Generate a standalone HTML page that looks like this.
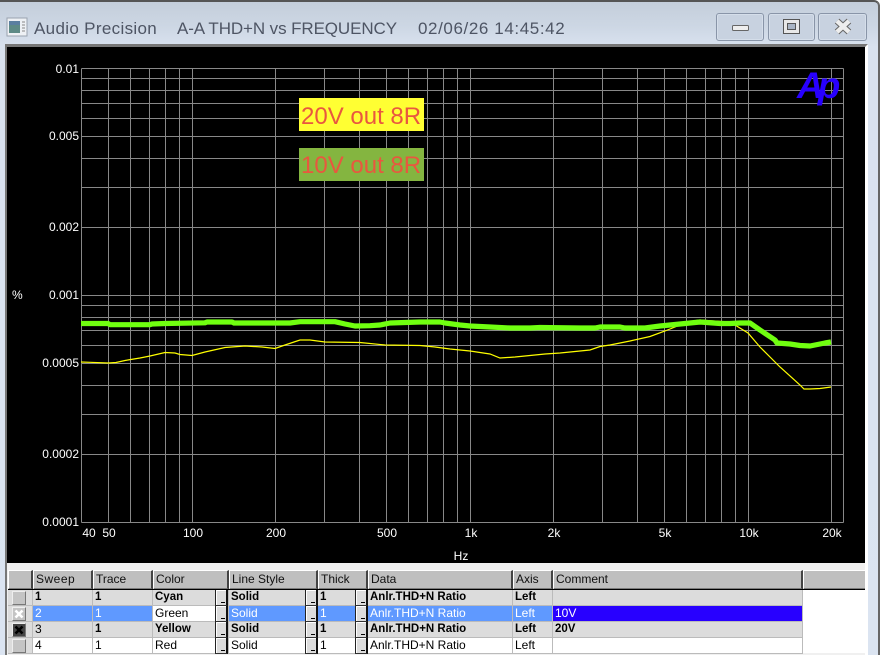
<!DOCTYPE html>
<html><head><meta charset="utf-8"><style>
html,body{margin:0;padding:0;width:882px;height:655px;overflow:hidden;background:#fff}
#win{position:absolute;left:0;top:0;width:880px;height:655px;background:linear-gradient(#c4cedb 0,#cdd7e4 25px,#d9e2ef 45px,#dbe4f1 655px);border-top:2px solid #555;border-right:2px solid #666;box-sizing:border-box;border-top-right-radius:6px}
.t{position:absolute;top:18px;font:17px/22px "Liberation Sans",sans-serif;color:#4e5564;white-space:pre}
.wb{position:absolute;top:13px;width:46px;height:26px;border:1px solid #8995a8;border-radius:3px;background:#c8d2e0;box-shadow:inset 0 0 0 1px #d5deea}
#client{position:absolute;left:5px;top:44px;width:863px;height:611px;background:#f0f0f0;border-left:2px solid #777;border-top:3px solid #777;box-sizing:border-box;border-right:3px solid #fff}
svg{position:absolute;left:0;top:0}
.lab{font:12px "Liberation Sans",sans-serif;fill:#fff}
.hd{position:absolute;top:570px;height:20px;box-sizing:border-box;background:#bfbfbf;border-top:1px solid #fff;border-left:1px solid #fff;border-right:2px solid #444;border-bottom:2px solid #7c7c7c;font:12px/17px "Liberation Sans",sans-serif;color:#111;padding-left:2px;white-space:nowrap;overflow:hidden}
#hline{position:absolute;left:8px;top:589px;width:857px;height:1px;background:#000}
.c{position:absolute;height:16px;box-sizing:border-box;border-right:1px solid #bbb;border-bottom:1px solid #bbb;font:12px/15px "Liberation Sans",sans-serif;color:#000;padding-left:2px;white-space:nowrap;overflow:hidden}
.b{font-weight:bold;font-size:11.5px}
.g{background:#dcdcdc}.w{background:#fff}.s{background:#5f99ff;color:#fff}
.dd{position:absolute;width:13px;height:16px;box-sizing:border-box;background:#dcdcdc;border-left:1px solid #222;border-right:2px solid #111;border-bottom:1px solid #333;box-shadow:inset 1px 1px 0 #fff}
.dd:after{content:"";position:absolute;right:1px;bottom:2px;width:4px;height:1px;background:#000}
.cb{position:absolute;left:12px;width:14px;height:14px;box-sizing:border-box;background:#c4c4c4;border:1px solid #eee;border-right-color:#777;border-bottom-color:#777}
</style></head><body>
<div id="win"></div>
<svg width="22" height="20" style="left:6px;top:17px"><rect x="1" y="1" width="20" height="18" fill="#eef1f5" stroke="#9aa3b0"/><rect x="3" y="4" width="11" height="12" fill="#5d8a86"/><rect x="3" y="4" width="11" height="4" fill="#5a7fa0"/><path d="M16 5h3M16 8h3M16 11h3M16 14h3" stroke="#888"/></svg>
<div class="t" style="left:34px;letter-spacing:.33px">Audio Precision</div>
<div class="t" style="left:177px;letter-spacing:-.1px">A-A THD+N vs FREQUENCY</div>
<div class="t" style="left:418px;letter-spacing:.6px">02/06/26 14:45:42</div>
<div class="wb" style="left:716px"></div><div class="wb" style="left:768px;width:45px"></div><div class="wb" style="left:818px;width:47px"></div>
<svg width="882" height="60" style="pointer-events:none"><rect x="732.5" y="25.5" width="16" height="5" rx="1" fill="#eee" stroke="#666"/><rect x="783.5" y="19.5" width="16" height="14" fill="#e8e8e8" stroke="#555"/><rect x="787.5" y="23.5" width="8" height="6" fill="#a9b4c4" stroke="#555"/><path d="M837 21l12 11M849 21l-12 11" stroke="#666" stroke-width="6.5"/><path d="M837 21l12 11M849 21l-12 11" stroke="#eee" stroke-width="4.5"/></svg>
<div id="client"></div>
<svg width="882" height="655" style="left:0;top:0">
<rect x="7" y="47" width="858" height="516" fill="#000"/>
<path shape-rendering="crispEdges" fill="none" stroke="#888" d="M81.5 68.5V522.5M108.5 68.5V522.5M130.5 68.5V522.5M149.5 68.5V522.5M165.5 68.5V522.5M179.5 68.5V522.5M192.5 68.5V522.5M275.5 68.5V522.5M324.5 68.5V522.5M359.5 68.5V522.5M386.5 68.5V522.5M408.5 68.5V522.5M427.5 68.5V522.5M443.5 68.5V522.5M457.5 68.5V522.5M470.5 68.5V522.5M553.5 68.5V522.5M602.5 68.5V522.5M637.5 68.5V522.5M664.5 68.5V522.5M686.5 68.5V522.5M705.5 68.5V522.5M721.5 68.5V522.5M735.5 68.5V522.5M748.5 68.5V522.5M831.5 68.5V522.5M843.5 68.5V522.5M81.5 68.5H843.5M81.5 78.5H843.5M81.5 90.5H843.5M81.5 103.5H843.5M81.5 118.5H843.5M81.5 136.5H843.5M81.5 158.5H843.5M81.5 187.5H843.5M81.5 227.5H843.5M81.5 295.5H843.5M81.5 305.5H843.5M81.5 317.5H843.5M81.5 330.5H843.5M81.5 345.5H843.5M81.5 363.5H843.5M81.5 385.5H843.5M81.5 414.5H843.5M81.5 454.5H843.5M81.5 522.5H843.5"/>
<polyline fill="none" stroke="#ffff00" stroke-width="1.2" points="81,362 90,362.3 108,363 116,362.5 125,360.5 140,358 150,356 165,352.5 175,353 180,354.5 192,355.5 205,352 225,347.5 245,346 262,347 275,348.5 285,345 300,340 310,340 325,342 360,342.5 385,345 420,345.5 435,347 450,349 470,351 490,354 500,358 515,357 545,354 560,353 590,350 600,346.5 610,345 630,341 650,336.5 665,331 680,325 690,321.5 700,320 706,320.5 730,322 735,325 748,333 760,347 780,367 800,385 804,389 810,389 820,388.5 831,387"/>
<polyline fill="none" stroke="#70ff10" stroke-width="5.2" stroke-linejoin="round" points="81,323.5 108,323.5 110,324.7 150,324.7 152,324 165,323.5 205,322.8 207,322 232,322 234,323 290,323 300,321.7 335,321.7 345,324 355,326 370,325.7 380,325 390,323 420,322 440,322 445,323 460,325 470,326 490,327 510,328 530,328 540,327.5 580,328 595,328 600,327 620,327 625,328 645,328 660,326 670,325 690,323 700,322 720,323.5 730,323.5 740,323 750,323 760,330 775,340 777,343 790,344 800,345.5 810,346 815,345 825,343 831,342"/>
<g class="lab" text-anchor="end">
<text class="lab" x="79" y="73">0.01</text>
<text class="lab" x="79" y="140">0.005</text>
<text class="lab" x="79" y="231">0.002</text>
<text class="lab" x="79" y="299">0.001</text>
<text class="lab" x="79" y="367">0.0005</text>
<text class="lab" x="79" y="458">0.0002</text>
<text class="lab" x="79" y="526">0.0001</text>
</g>
<text class="lab" x="12" y="299">%</text>
<g text-anchor="middle">
<text class="lab" x="89" y="537">40</text>
<text class="lab" x="109" y="537">50</text>
<text class="lab" x="193" y="537">100</text>
<text class="lab" x="276" y="537">200</text>
<text class="lab" x="387" y="537">500</text>
<text class="lab" x="471" y="537">1k</text>
<text class="lab" x="554" y="537">2k</text>
<text class="lab" x="665" y="537">5k</text>
<text class="lab" x="749" y="537">10k</text>
<text class="lab" x="832" y="537">20k</text>
<text class="lab" x="461" y="560">Hz</text>
</g>
<rect x="299" y="98" width="125" height="33" fill="#ffff33"/>
<rect x="299" y="148" width="125" height="33" fill="#84b540"/>
<text x="301" y="124" font-family="Liberation Sans" font-size="24" fill="#e9573f">20V out 8R</text>
<text x="301" y="173" font-family="Liberation Sans" font-size="24" fill="#e9573f">10V out 8R</text>
<text x="797" y="98" font-family="Liberation Sans" font-size="37" font-weight="bold" font-style="italic" letter-spacing="-6" fill="#2800ff">Ap</text>
</svg>
<div class="hd" style="left:8px;width:25px"></div>
<div class="hd" style="left:33px;width:60px;letter-spacing:.5px">Sweep</div>
<div class="hd" style="left:93px;width:60px">Trace</div>
<div class="hd" style="left:153px;width:76px">Color</div>
<div class="hd" style="left:229px;width:89px">Line Style</div>
<div class="hd" style="left:318px;width:50px">Thick</div>
<div class="hd" style="left:368px;width:145px">Data</div>
<div class="hd" style="left:513px;width:40px">Axis</div>
<div class="hd" style="left:553px;width:250px">Comment</div>
<div class="hd" style="left:803px;width:62px;border-right:0"></div>
<div id="hline"></div>
<div style="position:absolute;left:803px;top:590px;width:62px;height:63px;background:#fff"></div>
<!-- row 1 -->
<div class="c g" style="left:8px;top:590px;width:25px"></div>
<div class="c g b" style="left:33px;top:590px;width:60px">1</div>
<div class="c g b" style="left:93px;top:590px;width:60px">1</div>
<div class="c g b" style="left:153px;top:590px;width:76px">Cyan</div>
<div class="c g b" style="left:229px;top:590px;width:89px">Solid</div>
<div class="c g b" style="left:318px;top:590px;width:50px">1</div>
<div class="c g b" style="left:368px;top:590px;width:145px">Anlr.THD+N Ratio</div>
<div class="c g b" style="left:513px;top:590px;width:40px">Left</div>
<div class="c g" style="left:553px;top:590px;width:250px"></div>
<!-- row 2 -->
<div class="c g" style="left:8px;top:606px;width:25px"></div>
<div class="c s" style="left:33px;top:606px;width:60px">2</div>
<div class="c s" style="left:93px;top:606px;width:60px">1</div>
<div class="c w" style="left:153px;top:606px;width:76px">Green</div>
<div class="c s" style="left:229px;top:606px;width:89px">Solid</div>
<div class="c s" style="left:318px;top:606px;width:50px">1</div>
<div class="c s" style="left:368px;top:606px;width:145px">Anlr.THD+N Ratio</div>
<div class="c s" style="left:513px;top:606px;width:40px">Left</div>
<div class="c" style="left:553px;top:606px;width:250px;background:#2800ff;color:#fff">10V</div>
<!-- row 3 -->
<div class="c g" style="left:8px;top:622px;width:25px"></div>
<div class="c g b" style="left:33px;top:622px;width:60px;font-weight:normal;font-size:12px">3</div>
<div class="c g b" style="left:93px;top:622px;width:60px">1</div>
<div class="c g b" style="left:153px;top:622px;width:76px">Yellow</div>
<div class="c g b" style="left:229px;top:622px;width:89px">Solid</div>
<div class="c g b" style="left:318px;top:622px;width:50px">1</div>
<div class="c g b" style="left:368px;top:622px;width:145px">Anlr.THD+N Ratio</div>
<div class="c g b" style="left:513px;top:622px;width:40px">Left</div>
<div class="c g b" style="left:553px;top:622px;width:250px">20V</div>
<!-- row 4 -->
<div class="c g" style="left:8px;top:638px;width:25px"></div>
<div class="c w" style="left:33px;top:638px;width:60px">4</div>
<div class="c w" style="left:93px;top:638px;width:60px">1</div>
<div class="c w" style="left:153px;top:638px;width:76px">Red</div>
<div class="c w" style="left:229px;top:638px;width:89px">Solid</div>
<div class="c w" style="left:318px;top:638px;width:50px">1</div>
<div class="c w" style="left:368px;top:638px;width:145px">Anlr.THD+N Ratio</div>
<div class="c w" style="left:513px;top:638px;width:40px">Left</div>
<div class="c w" style="left:553px;top:638px;width:250px"></div>
<!-- dropdowns -->
<div class="dd" style="left:215px;top:590px"></div><div class="dd" style="left:215px;top:606px"></div><div class="dd" style="left:215px;top:622px"></div><div class="dd" style="left:215px;top:638px"></div>
<div class="dd" style="left:305px;top:590px"></div><div class="dd" style="left:305px;top:606px"></div><div class="dd" style="left:305px;top:622px"></div><div class="dd" style="left:305px;top:638px"></div>
<div class="dd" style="left:355px;top:590px"></div><div class="dd" style="left:355px;top:606px"></div><div class="dd" style="left:355px;top:622px"></div><div class="dd" style="left:355px;top:638px"></div>
<!-- checkboxes -->
<div class="cb" style="top:591px"></div>
<div class="cb" style="top:607px"></div>
<div class="cb" style="top:623px;background:#444"></div>
<div class="cb" style="top:639px"></div>
<svg width="882" height="655" style="left:0;top:0;pointer-events:none">
<path d="M15.5 610.5l7 7M22.5 610.5l-7 7" stroke="#fff" stroke-width="2.6"/>
<path d="M15.5 626.5l7 7M22.5 626.5l-7 7" stroke="#000" stroke-width="2.6"/>
</svg>
</body></html>
